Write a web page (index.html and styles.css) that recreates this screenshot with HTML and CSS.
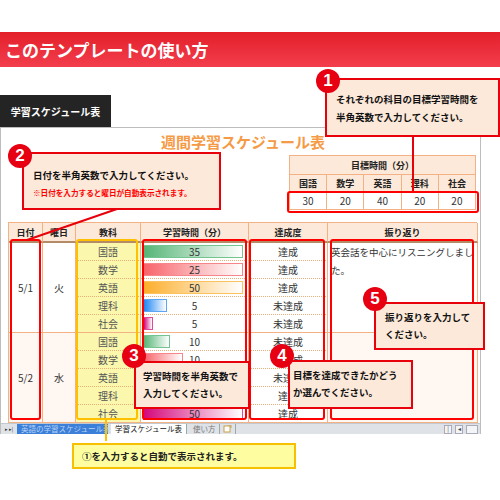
FILE: index.html
```html
<!DOCTYPE html>
<html lang="ja">
<head>
<meta charset="utf-8">
<title>このテンプレートの使い方</title>
<link rel="stylesheet" href="styles.css">
</head>
<body>
<div class="page">
  <div class="band"><h1>このテンプレートの使い方</h1></div>
  <div class="tab">学習スケジュール表</div>

  <div class="sheet">
    <div class="title">週間学習スケジュール表</div>

    <div class="goal">
      <div class="gc gh">目標時間（分）</div>
      <div class="gc gs">国語</div>
      <div class="gc gs">数学</div>
      <div class="gc gs">英語</div>
      <div class="gc gs">理科</div>
      <div class="gc gs">社会</div>
      <div class="gc gv">30</div>
      <div class="gc gv">20</div>
      <div class="gc gv">40</div>
      <div class="gc gv">20</div>
      <div class="gc gv">20</div>
    </div>

    <div class="main">
      <div class="h">日付</div>
      <div class="h">曜日</div>
      <div class="h">教科</div>
      <div class="h">学習時間（分）</div>
      <div class="h">達成度</div>
      <div class="h">振り返り</div>

      <div class="c span date">5/1</div>
      <div class="c span day">火</div>
      <div class="c s">国語</div>
      <div class="c t"><span class="bar green" style="width:100px"></span><span class="n">35</span></div>
      <div class="c a">達成</div>
      <div class="c span rev">英会話を中心にリスニングしました。</div>
      <div class="c s">数学</div>
      <div class="c t"><span class="bar red" style="width:100px"></span><span class="n">25</span></div>
      <div class="c a">達成</div>
      <div class="c s">英語</div>
      <div class="c t"><span class="bar orange" style="width:100px"></span><span class="n">50</span></div>
      <div class="c a">達成</div>
      <div class="c s">理科</div>
      <div class="c t"><span class="bar blue" style="width:24px"></span><span class="n">5</span></div>
      <div class="c a">未達成</div>
      <div class="c s last">社会</div>
      <div class="c t last"><span class="bar pink" style="width:10px"></span><span class="n">5</span></div>
      <div class="c a last">未達成</div>

      <div class="c span date alt">5/2</div>
      <div class="c span day alt">水</div>
      <div class="c s">国語</div>
      <div class="c t"><span class="bar green" style="width:27px"></span><span class="n">10</span></div>
      <div class="c a">未達成</div>
      <div class="c span rev alt"></div>
      <div class="c s">数学</div>
      <div class="c t"><span class="bar red" style="width:40px"></span><span class="n">10</span></div>
      <div class="c a">未達成</div>
      <div class="c s">英語</div>
      <div class="c t"><span class="bar orange" style="width:75px"></span><span class="n">30</span></div>
      <div class="c a">未達成</div>
      <div class="c s">理科</div>
      <div class="c t"><span class="bar blue" style="width:100px"></span><span class="n">20</span></div>
      <div class="c a">達成</div>
      <div class="c s last">社会</div>
      <div class="c t last"><span class="bar pink" style="width:100px"></span><span class="n">50</span></div>
      <div class="c a last">達成</div>
    </div>

    <div class="tabs">
      <span class="nav">&#9656; &#9656;|</span>
      <span class="st blue-tab">英語の学習スケジュール表</span>
      <span class="st cur">学習スケジュール表</span>
      <span class="st other">使い方</span>
      <span class="st ico"><svg width="9" height="8" viewBox="0 0 9 8"><rect x="1" y="1" width="6" height="6" fill="#fff" stroke="#c9a04a" stroke-width="1"/><path d="M5 0 L8 0 L8 3" fill="none" stroke="#c9a04a" stroke-width="1"/></svg></span>
      <span class="fill"></span>
      <span class="scroll"><span class="sb">|</span><span class="sb">&#9666;</span><span class="thumb"></span></span>
    </div>
  </div>

  <div class="note">①を入力すると自動で表示されます。</div>

  <!-- highlight frames -->
  <div class="hl goal-hl"></div>
  <div class="hl date-hl"></div>
  <div class="hl yel-hl"></div>
  <div class="hl time-hl"></div>
  <div class="hl ach-hl"></div>
  <div class="hl rev-hl"></div>

  <svg class="lines" width="500" height="500" viewBox="0 0 500 500">
    <line x1="413" y1="136" x2="413" y2="191" stroke="#e8000b" stroke-width="2"/>
    <line x1="117" y1="209" x2="27" y2="240" stroke="#e8000b" stroke-width="2"/>
    <line x1="106" y1="420" x2="106" y2="441" stroke="#ffc000" stroke-width="2"/>
  </svg>

  <div class="callout c1"><p>それぞれの科目の目標学習時間を</p><p>半角英数で入力してください。</p></div>
  <div class="num n1">1</div>

  <div class="callout c2"><p>日付を半角英数で入力してください。</p><p class="small">※日付を入力すると曜日が自動表示されます。</p></div>
  <div class="num n2">2</div>

  <div class="callout c5"><p>振り返りを入力して</p><p>ください。</p></div>
  <div class="num n5">5</div>

  <div class="callout c3"><p>学習時間を半角英数で</p><p>入力してください。</p></div>
  <div class="num n3">3</div>

  <div class="callout c4"><p>目標を達成できたかどう</p><p>か選んでください。</p></div>
  <div class="num n4">4</div>
</div>
</body>
</html>
```

FILE: styles.css
```css
* { box-sizing: border-box; }
html, body { margin: 0; padding: 0; background: #fff; }
body {
  font-family: "Noto Sans CJK JP", "Noto Sans", sans-serif;
  color: #222;
}
.page { position: relative; width: 500px; height: 500px; overflow: hidden; }

.band {
  margin-top: 32px;
  height: 35px;
  background: linear-gradient(#e3202a, #f33d4d);
  display: flex;
  align-items: center;
  padding-left: 5px;
}
.band h1 { margin: 0; font-size: 17px; font-weight: 700; color: #fff; line-height: 1; }

.tab {
  margin-top: 28px;
  width: 111px;
  height: 32px;
  background: #242424;
  color: #fff;
  font-size: 10px;
  font-weight: 700;
  display: flex;
  align-items: center;
  justify-content: center;
}

.sheet {
  width: 481px;
  border: 1px solid #bdbdbd;
  border-bottom: none;
  padding-top: 4px;
}
.title {
  text-align: center;
  padding-left: 5px;
  font-size: 15px;
  line-height: 20px;
  font-weight: 700;
  color: #f59a45;
}

.goal {
  width: 187px;
  margin: 3px 4px 0 auto;
  display: grid;
  grid-template-columns: repeat(5, 1fr);
  border-top: 1px solid #f4b183;
  border-left: 1px solid #f4b183;
}
.gc {
  border-right: 1px solid #f4b183;
  border-bottom: 1px solid #f4b183;
  display: flex;
  align-items: center;
  justify-content: center;
  font-size: 9px;
}
.gh { grid-column: 1 / -1; height: 19px; background: #fde9d9; font-weight: 700; }
.gs { height: 17px; background: #fde9d9; font-weight: 700; }
.gv { height: 18px; background: #fff; font-size: 10px; color: #333; }

.main {
  margin: 12px 0 0 7px;
  width: 469px;
  display: grid;
  grid-template-columns: 34px 33px 65px 108px 79px 150px;
  grid-template-rows: 20px repeat(10, 18px);
  border-top: 1px solid #f4b183;
  border-left: 1px solid #f4b183;
}
.h {
  background: #fde9d9;
  border-right: 1px solid #f4b183;
  border-bottom: 2px solid #b38b66;
  font-size: 9px;
  font-weight: 700;
  display: flex;
  align-items: center;
  justify-content: center;
}
.c {
  border-right: 1px solid #f4b183;
  border-bottom: 1px dotted #eab07a;
  font-size: 10px;
  color: #333;
  display: flex;
  align-items: center;
  justify-content: center;
}
.c.last { border-bottom: 1px solid #f4b183; }
.span { grid-row: span 5; border-bottom: 1px solid #f4b183; }
.alt { background: #fff7f1; }
.s { background: #fbf8ad; color: #555; }
.rev {
  align-items: flex-start;
  justify-content: flex-start;
  padding: 0 2px 0 3px;
  font-size: 9.5px;
  line-height: 18px;
  word-break: break-all;
}
.t { position: relative; }
.bar {
  position: absolute;
  left: 2px;
  top: 2px;
  bottom: 2px;
  border: 1px solid;
}
.n { position: relative; }
.green { background: linear-gradient(to right, #55b576, #fff); border-color: #74c48f; }
.red { background: linear-gradient(to right, #f7636a, #fff); border-color: #f7868b; }
.orange { background: linear-gradient(to right, #fcae2a, #fff); border-color: #fbc25e; }
.blue { background: linear-gradient(to right, #1f86f2, #fff); border-color: #5aa6f5; }
.pink { background: linear-gradient(to right, #d4097c, #fff); border-color: #dc4a9b; }

.tabs {
  display: flex;
  align-items: stretch;
  height: 11px;
  background: #dfe3e8;
  border-top: 1px solid #c4c9d0;
  font-size: 7.5px;
  line-height: 10px;
  color: #222;
}
.nav { width: 16px; font-size: 5px; color: #333; display: flex; align-items: center; justify-content: center; }
.st { padding: 0 4px; display: flex; align-items: center; white-space: nowrap; }
.blue-tab { background: #3c7fd8; color: #b9d4f6; width: 91px; }
.cur { background: #fff; color: #111; margin-left: 3px; border-right: 1px solid #9aa; }
.other { color: #777; margin-left: 2px; border-right: 1px solid #9aa; }
.ico { padding: 0 3px; border-right: 1px solid #9aa; }
.fill { flex: 1; }
.scroll { display: flex; align-items: center; gap: 3px; padding-right: 2px; font-size: 6px; color: #444; }
.sb { width: 8px; height: 9px; background: #f2f4f6; border: 1px solid #aab; display: flex; align-items: center; justify-content: center; }
.thumb { width: 12px; height: 9px; background: #f2f4f6; border: 1px solid #aab; }

.note {
  margin: 9px 0 0 72px;
  width: 224px;
  height: 26px;
  background: #fefea0;
  border: 2px solid #f7c000;
  font-size: 9.5px;
  font-weight: 700;
  display: flex;
  align-items: center;
  padding-left: 8px;
}

.hl {
  position: absolute;
  border: 2px solid #f00;
  border-radius: 3px;
}
.goal-hl { left: 287px; top: 191px; width: 192px; height: 22px; }
.date-hl { left: 10px; top: 239px; width: 31px; height: 181px; }
.yel-hl { left: 76px; top: 239px; width: 62px; height: 181px; border-color: #ffc000; }
.time-hl { left: 142px; top: 239px; width: 105px; height: 181px; }
.ach-hl { left: 249px; top: 239px; width: 76px; height: 181px; }
.rev-hl { left: 330px; top: 239px; width: 144px; height: 181px; }

.lines { position: absolute; left: 0; top: 0; pointer-events: none; }

.callout {
  position: absolute;
  background: #fde9da;
  border: 2px solid #e8000b;
  font-size: 9.5px;
  font-weight: 700;
  color: #111;
}
.callout p { margin: 0; line-height: 18px; white-space: nowrap; }
.callout .small { font-size: 7.6px; color: #f00; }
.c1 { left: 325px; top: 78px; width: 175px; height: 59px; padding: 10px 0 0 9px; }
.c2 { left: 22px; top: 152px; width: 199px; height: 58px; padding: 12px 0 0 9px; }
.c3 { left: 134px; top: 361px; width: 116px; height: 48px; padding: 5px 0 0 7px; line-height: 17px; }
.c4 { left: 288px; top: 360px; width: 125px; height: 49px; padding: 5px 0 0 3px; }
.c5 { left: 374px; top: 302px; width: 111px; height: 48px; padding: 5px 0 0 9px; }
.c3 p, .c4 p, .c5 p { line-height: 17px; }

.num {
  position: absolute;
  width: 24px;
  height: 24px;
  border-radius: 50%;
  background: #e60012;
  color: #fff;
  font-family: "Liberation Sans", Arial, sans-serif;
  font-weight: 700;
  font-size: 17px;
  display: flex;
  align-items: center;
  justify-content: center;
}
.n1 { left: 316px; top: 69px; }
.n2 { left: 8px; top: 144px; }
.n3 { left: 122px; top: 344px; }
.n4 { left: 270px; top: 344px; }
.n5 { left: 363px; top: 287px; }
```
